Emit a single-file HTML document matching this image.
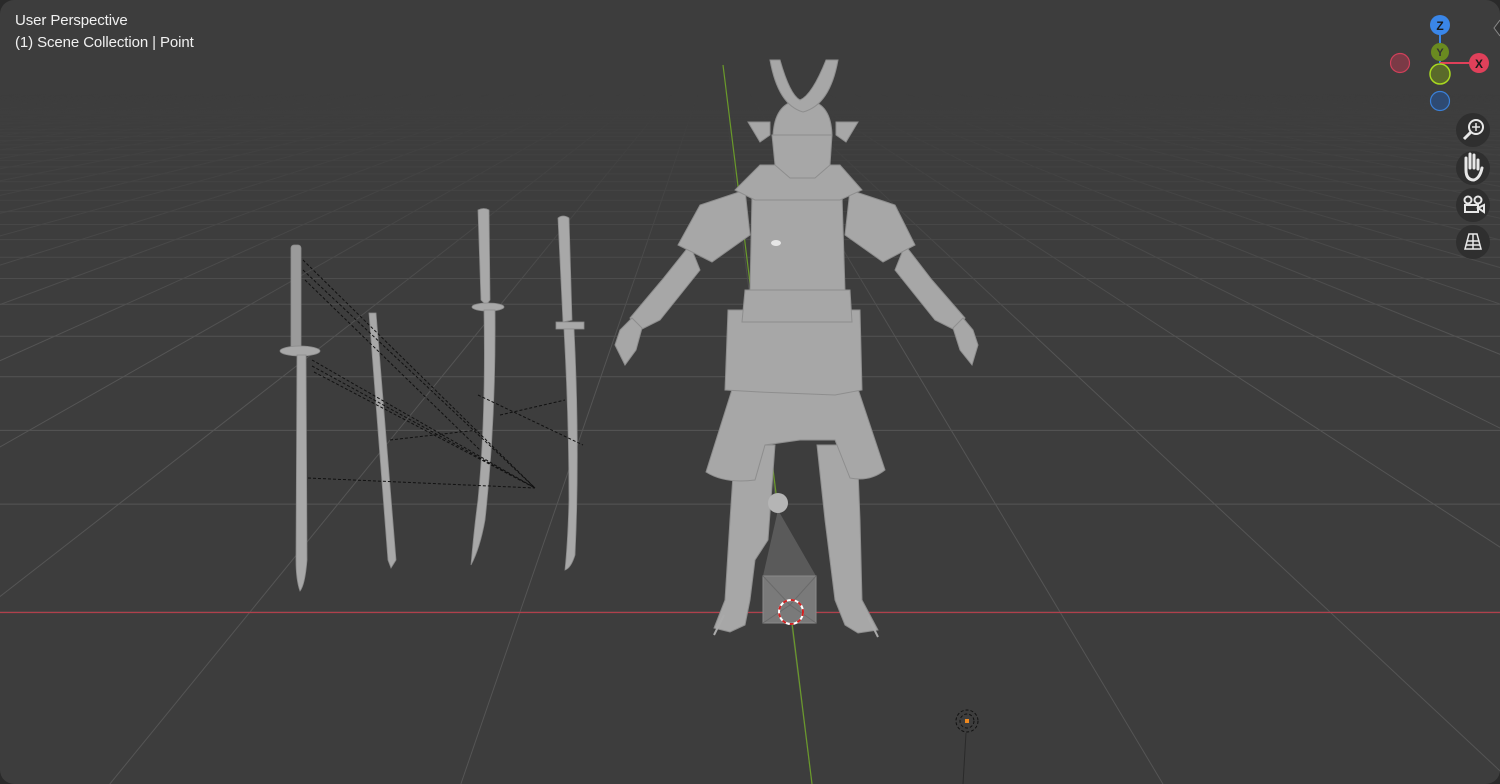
<!DOCTYPE html>
<html><head><meta charset="utf-8"><style>
html,body{margin:0;padding:0;width:1500px;height:784px;overflow:hidden;background:#2a2a2a}
#vp{position:absolute;left:0;top:0;width:1500px;height:784px;background:#3d3d3d;border-radius:14px;overflow:hidden}
.t{position:absolute;left:15px;color:#f0f0f0;font-family:"Liberation Sans",sans-serif;font-size:15px;letter-spacing:-0.1px}
svg{position:absolute;left:0;top:0}
</style></head><body>
<div id="vp">
<svg id="g" width="1500" height="784" viewBox="0 0 1500 784">
<defs>
<linearGradient id="fg" x1="0" y1="0" x2="0" y2="784" gradientUnits="userSpaceOnUse">
<stop offset="0" stop-color="#000"/><stop offset="0.12" stop-color="#000"/><stop offset="0.28" stop-color="#666"/><stop offset="0.45" stop-color="#fff"/><stop offset="1" stop-color="#fff"/>
</linearGradient>
<mask id="m"><rect width="1500" height="784" fill="url(#fg)"/></mask>
</defs>
<g id="grid" stroke="#555" stroke-width="1" fill="none" mask="url(#m)"></g>
<line x1="0" y1="612.5" x2="1500" y2="612.5" stroke="#b0404c" stroke-width="1.2"/>
<line x1="723" y1="65" x2="812" y2="784" stroke="#6a9a2a" stroke-width="1.2"/>
<g fill="#a8a8a8" stroke="#8a8a8a" stroke-width="0.8">
<rect x="291" y="245" width="10" height="105" rx="3" fill="#9a9a9a"/>
<ellipse cx="300" cy="351" rx="20" ry="5"/>
<path d="M297 355 L306 355 L307 560 Q305 585 300 591 Q296 580 296 560 Z"/>
<path d="M369 313 L376 313 L396 560 L391 568 L388 560 Z"/>
<path d="M478 210 Q484 207 489 210 L490 300 L486 305 L481 300 Z"/>
<ellipse cx="488" cy="307" rx="16" ry="4"/>
<path d="M484 310 L495 310 Q496 420 485 520 Q480 548 471 565 Q474 530 478 500 Q486 420 484 310 Z"/>
<path d="M558 218 Q563 214 569 218 L572 320 L563 322 Z"/>
<rect x="556" y="322" width="28" height="7"/>
<path d="M564 329 L574 329 Q580 450 575 555 Q571 568 565 570 Q568 540 569 500 Q569 420 564 329 Z"/>
</g>
<g stroke="#111" stroke-width="1" stroke-dasharray="3,2" fill="none">
<path d="M303 260 L535 488 M303 270 L535 488 M305 280 L480 450 M312 360 L535 488 M312 366 L535 488 M314 372 L535 488 M308 478 L535 488 M390 440 L478 430 M500 415 L565 400 M478 395 L583 445"/>
</g>
<g fill="#a7a7a7" stroke="#8e8e8e" stroke-width="1">
<path d="M735 445 L775 445 L768 540 L755 560 L750 600 L745 625 L730 632 L714 628 L725 600 L730 520 Z"/>
<path d="M817 445 L857 445 L860 520 L862 600 L878 630 L858 633 L845 625 L835 600 L825 520 Z"/>
<path d="M735 380 L855 380 L885 470 Q870 482 850 478 L835 440 L800 440 L765 445 L755 480 Q725 484 706 472 Z"/>
<path d="M728 310 L860 310 L862 390 L835 395 L760 392 L725 390 Z"/>
<path d="M745 290 L850 290 L852 322 L742 322 Z"/>
<path d="M690 245 L700 270 L660 320 L640 330 L630 318 L662 280 Z"/>
<path d="M905 245 L895 270 L935 320 L955 330 L965 318 L932 280 Z"/>
<path d="M632 318 L642 328 L636 350 L625 365 L615 345 L620 330 Z"/>
<path d="M963 318 L953 328 L960 350 L972 365 L978 345 L973 330 Z"/>
<path d="M678 245 L700 205 L745 190 L750 235 L712 262 Z"/>
<path d="M915 245 L895 205 L850 190 L845 235 L883 262 Z"/>
<path d="M752 195 Q800 175 842 195 L845 290 L750 290 Z"/>
<path d="M735 190 L760 165 L840 165 L862 190 L840 200 L755 200 Z"/>
<path d="M748 122 L770 122 L770 135 L760 142 Z"/>
<path d="M858 122 L836 122 L836 135 L846 142 Z"/>
<path d="M772 135 L832 135 L830 165 L815 178 L790 178 L775 165 Z"/>
<path d="M773 135 Q775 100 803 100 Q831 100 832 135 Z"/>
<path d="M770 60 L780 60 Q790 95 800 100 Q812 95 826 60 L838 60 Q830 105 803 112 Q778 105 770 60 Z"/>
</g>
<ellipse cx="776" cy="243" rx="5" ry="3" fill="#e6e6e6"/>
<path d="M778 510 L763 576 L816 576 Z" fill="#5a5a5a"/>
<rect x="763" y="576" width="53" height="47" fill="#7a7a7a" stroke="#8a8a8a"/>
<path d="M763 576 L790 605 L816 576 M763 623 L790 605 L816 623" stroke="#6a6a6a" fill="none"/>
<circle cx="778" cy="503" r="10" fill="#b5b5b5"/>
<circle cx="791" cy="612" r="12" fill="none" stroke="#fff" stroke-width="2"/>
<circle cx="791" cy="612" r="12" fill="none" stroke="#d02020" stroke-width="2" stroke-dasharray="4,4"/>
<line x1="714" y1="635" x2="724" y2="615" stroke="#aaa" stroke-width="2"/>
<line x1="878" y1="637" x2="868" y2="617" stroke="#aaa" stroke-width="2"/>
<circle cx="967" cy="721" r="11" fill="none" stroke="#111" stroke-dasharray="3,2"/>
<circle cx="967" cy="721" r="7" fill="none" stroke="#111" stroke-dasharray="3,2"/>
<rect x="965" y="719" width="4" height="4" fill="#f08a20"/>
<line x1="966" y1="733" x2="963" y2="784" stroke="#2a2a2a"/>
<line x1="1440" y1="63" x2="1440" y2="25" stroke="#3a86e8" stroke-width="2"/>
<line x1="1440" y1="63" x2="1479" y2="63" stroke="#e0405a" stroke-width="2"/>
<circle cx="1400" cy="63" r="9.5" fill="#7a3a46" stroke="#d0405a" stroke-width="1.2"/>
<circle cx="1440" cy="101" r="9.5" fill="#2e4a72" stroke="#3a80d8" stroke-width="1.2"/>
<circle cx="1440" cy="52" r="9" fill="#6a8a20"/>
<text x="1440" y="56" font-family="Liberation Sans,sans-serif" font-size="11" font-weight="bold" fill="#333" text-anchor="middle">Y</text>
<circle cx="1440" cy="74" r="10" fill="#5a6a2a" stroke="#a8d820" stroke-width="1.5"/>
<circle cx="1440" cy="25" r="10" fill="#3a86e8"/>
<text x="1440" y="30" font-family="Liberation Sans,sans-serif" font-size="12" font-weight="bold" fill="#1a1a1a" text-anchor="middle">Z</text>
<circle cx="1479" cy="63" r="10" fill="#e0405a"/>
<text x="1479" y="68" font-family="Liberation Sans,sans-serif" font-size="12" font-weight="bold" fill="#1a1a1a" text-anchor="middle">X</text>
<path d="M1500 20 L1494 28 L1500 36" fill="#333" stroke="#888"/>
<g fill="#2f2f2f"><circle cx="1473" cy="130" r="17"/><circle cx="1473" cy="168" r="17"/><circle cx="1473" cy="205" r="17"/><circle cx="1473" cy="242" r="17"/></g>
<g stroke="#e8e8e8" stroke-width="2" fill="none">
<circle cx="1476" cy="127" r="7"/><line x1="1471" y1="132" x2="1464" y2="139" stroke-width="3"/>
<path d="M1476 123v8M1472 127h8" stroke-width="1.5"/>
<path d="M1466 170 v-12 M1470 168 v-14 M1474 168 v-13 M1478 169 v-9 M1466 170 Q1466 180 1474 180 Q1480 178 1482 168" stroke-width="3" stroke-linecap="round"/>
<circle cx="1468" cy="200" r="3.5"/><circle cx="1478" cy="200" r="3.5"/><rect x="1465" y="205" width="13" height="7"/><path d="M1478 208 l6 -3 v7 z"/>
<path d="M1465 249 L1469 234 L1477 234 L1481 249 Z M1467 241 h12 M1473 234 v15 M1466 245 h14" stroke-width="1.5"/>
</g>
</svg>
<div class="t" style="top:12px">User Perspective</div>
<div class="t" style="top:34px">(1) Scene Collection | Point</div>
</div>
<script>
var g=document.getElementById('grid'),s='',vx=717,vy=39;
for(var k=-30;k<=30;k++){var x=790+270*k;var dx=x-vx,dy=612-vy;var t=(784-vy)/dy;s+='<line x1="'+vx+'" y1="'+vy+'" x2="'+(vx+dx*t)+'" y2="784"/>';}
for(var n=0;n<80;n++){var y=vy+1/(0.001745+0.000405*n);if(y<110)break;s+='<line x1="0" y1="'+y.toFixed(1)+'" x2="1500" y2="'+y.toFixed(1)+'"/>';}
g.innerHTML=s;
</script>
</body></html>
